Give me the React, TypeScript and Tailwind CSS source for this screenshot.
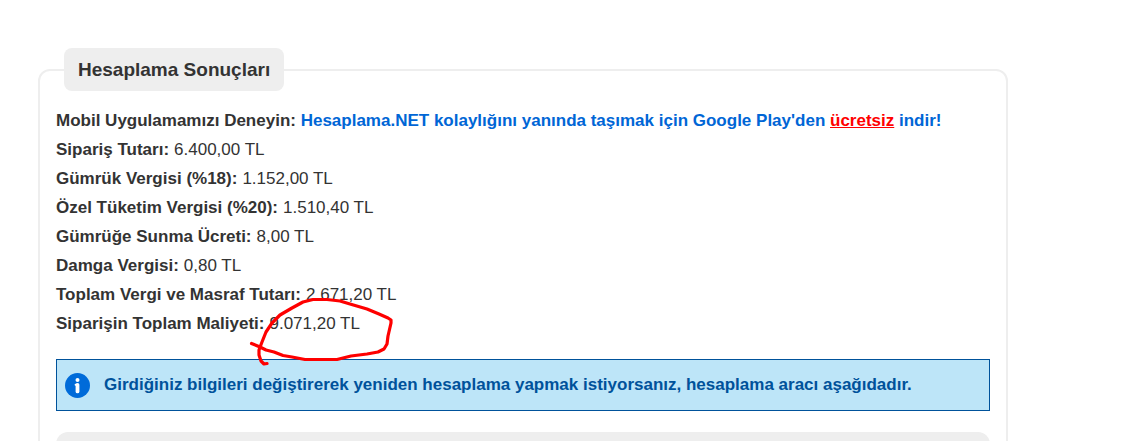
const results = [
  { label: 'Sipariş Tutarı:', value: '6.400,00 TL' },
  { label: 'Gümrük Vergisi (%18):', value: '1.152,00 TL' },
  { label: 'Özel Tüketim Vergisi (%20):', value: '1.510,40 TL' },
  { label: 'Gümrüğe Sunma Ücreti:', value: '8,00 TL' },
  { label: 'Damga Vergisi:', value: '0,80 TL' },
  { label: 'Toplam Vergi ve Masraf Tutarı:', value: '2.671,20 TL' },
  { label: 'Siparişin Toplam Maliyeti:', value: '9.071,20 TL' },
]

function InfoIcon() {
  return (
    <svg viewBox="0 0 25 25" className="h-[25px] w-[25px] shrink-0" aria-hidden="true">
      <circle cx="12.5" cy="12.5" r="12.5" fill="#006bd9" />
      <circle cx="12.5" cy="7" r="2" fill="#fff" />
      <path d="M12.5 11.8v6.6" stroke="#fff" strokeWidth="3.8" strokeLinecap="round" />
      <path d="M10.600 11.700h2" stroke="#fff" strokeWidth="2" strokeLinecap="round" />
    </svg>
  )
}

// Hand-drawn circle around the total
function Scribble() {
  return (
    <svg
      viewBox="0 0 150 74"
      className="pointer-events-none absolute top-[188px] left-[190px] h-[74px] w-[150px]"
      fill="none"
      stroke="#fe0000"
      strokeWidth="3.2"
      strokeLinecap="round"
      strokeLinejoin="round"
      aria-hidden="true"
    >
      <path d="M5.500 49.500L14 53L20 56L28 58L37 61.500L46 63L59 65.500H91L105 62L121 60L132 58L138 55L141 50L142 42L145 29V26L142 24L133 20L121 15L104 10L94 7L81 5.500H67L57 8L46 14L34 21L26 29L20 38L16 48L13 56V61L15 67L18 70L21 69.500" />
    </svg>
  )
}

export default function App() {
  return (
    <main className="h-screen overflow-hidden bg-white pt-12 pr-[137px] pl-[38px] font-['Liberation_Sans',Arial,sans-serif] text-[17px] leading-[29px] text-[#333]">
      <fieldset className="min-w-0 rounded-xl border-2 border-[#eee] px-4 pb-6">
        <legend className="ml-2 rounded-lg bg-[#eee] px-[14px] py-[7px] text-[19px] font-bold">
          Hesaplama Sonuçları
        </legend>

        <div className="relative mt-[15px]">
          <p className="font-bold">
            Mobil Uygulamamızı Deneyin:{' '}
            <a href="#indir" className="text-[#0066d6]">
              Hesaplama.NET kolaylığını yanında taşımak için Google Play'den{' '}
              <span className="text-[#f00] underline">ücretsiz</span> indir!
            </a>
          </p>
          <dl>
            {results.map((row) => (
              <div key={row.label} className="flex gap-[5px]">
                <dt className="font-bold">{row.label}</dt>
                <dd>{row.value}</dd>
              </div>
            ))}
          </dl>
          <Scribble />
        </div>

        <div className="mt-[21px] flex items-center gap-[14px] border border-[#00529b] bg-[#bde5f8] px-2 py-[11px] leading-7 font-bold text-[#00529b]">
          <InfoIcon />
          <p>Girdiğiniz bilgileri değiştirerek yeniden hesaplama yapmak istiyorsanız, hesaplama aracı aşağıdadır.</p>
        </div>

        <div className="mt-[21px] h-12 rounded-xl bg-[#eee]" />
      </fieldset>
    </main>
  )
}
